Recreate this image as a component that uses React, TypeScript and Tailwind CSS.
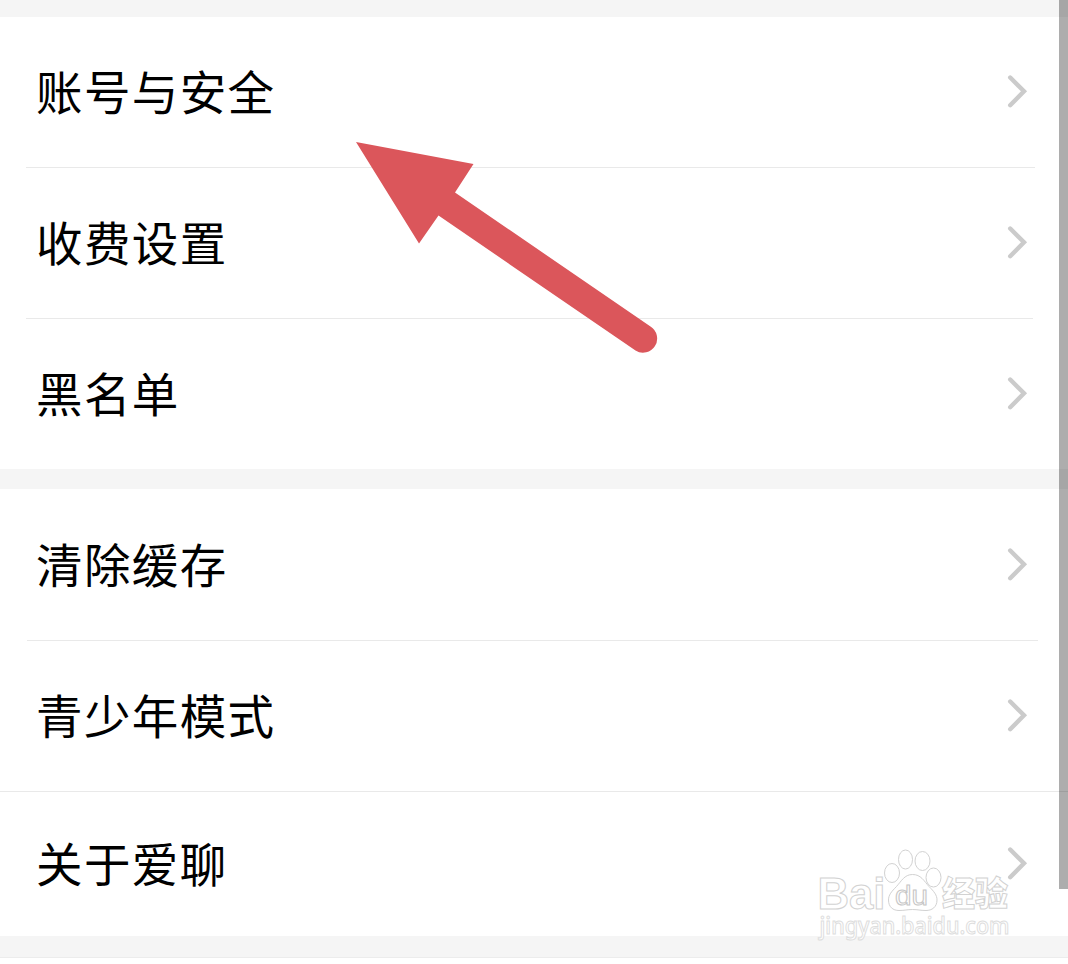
type RowProps = {
  label: string;
  className: string;
  divider?: string;
};

const Chevron = () => (
  <svg
    className="w-6 h-9 shrink-0"
    viewBox="0 0 24 36"
    fill="none"
    stroke="#cbcbcb"
    strokeWidth="4.4"
    strokeLinecap="round"
    strokeLinejoin="miter"
  >
    <path d="M5.2 3.5 L19 17.3 L5.2 31.2" />
  </svg>
);

const Row = ({ label, className, divider }: RowProps) => (
  <li className={`flex flex-col ${className}`}>
    <button className="flex-1 flex items-center justify-between pl-9 pr-[39px] text-left">
      <span className="text-[46.5px] leading-[60px] tracking-[1.4px] pb-1">
        {label}
      </span>
      <Chevron />
    </button>
    {divider && <div className={`h-px bg-[#e9e9e9] ${divider}`} />}
  </li>
);

const PointerArrow = () => (
  <svg
    className="absolute left-[350px] top-[136px] w-[316px] h-[224px] pointer-events-none"
    viewBox="350 136 316 224"
  >
    <path
      d="M356 142 L473.5 164 L455 192.5 L650.5 326.5 A14 14 0 0 1 635.5 350.5 L438.5 215.5 L419 243.5 Z"
      fill="#db565b"
    />
  </svg>
);

const Watermark = () => (
  <svg
    className="absolute left-[800px] top-[840px] w-[240px] h-[120px] pointer-events-none opacity-95"
    viewBox="800 840 240 120"
    fill="#ffffff"
    stroke="#d0d0d0"
    strokeWidth="1"
  >
    <text
      x="817.5"
      y="908.5"
      fontSize="44"
      fontWeight="700"
      fontFamily="'Liberation Sans', Arial, sans-serif"
      textLength="68"
      lengthAdjust="spacingAndGlyphs"
    >
      Bai
    </text>
    <ellipse cx="892" cy="873" rx="7.5" ry="9.5" />
    <ellipse cx="905.5" cy="859.5" rx="7" ry="9.5" />
    <ellipse cx="922.5" cy="861" rx="7.5" ry="9.5" />
    <ellipse cx="933.5" cy="877.5" rx="7.5" ry="9.5" />
    <path d="M912.5 874.5 C921 874.5 924 881 929 886.5 C934 891.5 937 895 937 900 C937 907 932 910.5 926 910.5 C920 910.5 918 909.5 912.5 909.5 C907 909.5 905 910.5 899 910.5 C893 910.5 888.5 907 888.5 900 C888.5 895 891.5 891.5 896.5 886.5 C901.5 881 904.5 874.5 912.5 874.5 Z" />
    <text
      x="895"
      y="904.5"
      fontSize="27"
      fontFamily="'Liberation Sans', Arial, sans-serif"
      stroke="#c4c4c4"
      textLength="33"
      lengthAdjust="spacingAndGlyphs"
    >
      du
    </text>
    <text
      x="942"
      y="906"
      fontSize="34"
      fontWeight="900"
      fontFamily="'Noto Sans CJK SC', sans-serif"
      textLength="66"
      lengthAdjust="spacingAndGlyphs"
    >
      经验
    </text>
    <text
      x="819.5"
      y="934"
      fontSize="23"
      fontWeight="500"
      fontFamily="'Noto Sans', sans-serif"
      stroke="#dcdcdc"
      textLength="190"
      lengthAdjust="spacingAndGlyphs"
    >
      jingyan.baidu.com
    </text>
  </svg>
);

const App = () => {
  return (
    <div className="relative w-full h-[964px] overflow-hidden bg-white text-black font-['Noto_Sans_CJK_SC',sans-serif]">
      <div className="h-[17px] bg-[#f5f5f5]" />
      <ul>
        <Row
          label="账号与安全"
          className="h-[151px]"
          divider="ml-[26px] mr-[33px]"
        />
        <Row
          label="收费设置"
          className="h-[151px]"
          divider="ml-[26px] mr-[35px]"
        />
        <Row label="黑名单" className="h-[150px]" />
      </ul>
      <div className="h-5 bg-[#f5f5f5]" />
      <ul>
        <Row
          label="清除缓存"
          className="h-[152px]"
          divider="ml-[27px] mr-[30px]"
        />
        <Row label="青少年模式" className="h-[151px]" divider="w-full" />
        <Row label="关于爱聊" className="h-36" />
      </ul>
      <div className="h-[22px] bg-[#f5f5f5] border-b border-[#ececec]" />

      <PointerArrow />
      <Watermark />
      <div className="absolute right-0 top-0 w-[9px] h-[889px] bg-black/32" />
    </div>
  );
};

export default App;
